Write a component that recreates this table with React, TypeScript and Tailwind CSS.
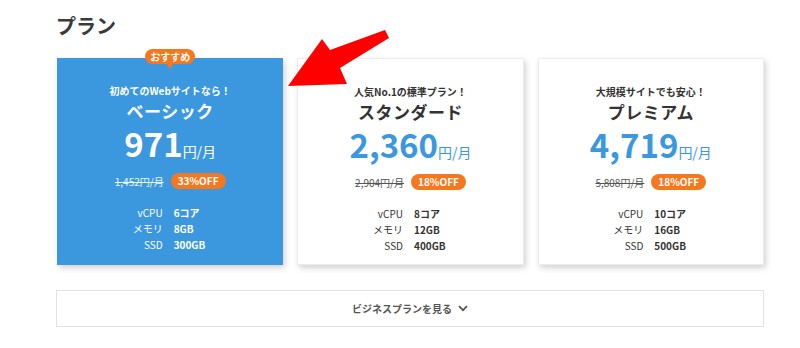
import { FC } from 'react';

type Plan = {
  lead: string;
  name: string;
  price: string;
  was: string;
  off: string;
  cpu: string;
  mem: string;
  ssd: string;
  featured?: boolean;
};

const plans: Plan[] = [
  { lead: '初めてのWebサイトなら！', name: 'ベーシック', price: '971', was: '1,452円/月', off: '33%OFF', cpu: '6コア', mem: '8GB', ssd: '300GB', featured: true },
  { lead: '人気No.1の標準プラン！', name: 'スタンダード', price: '2,360', was: '2,904円/月', off: '18%OFF', cpu: '8コア', mem: '12GB', ssd: '400GB' },
  { lead: '大規模サイトでも安心！', name: 'プレミアム', price: '4,719', was: '5,808円/月', off: '18%OFF', cpu: '10コア', mem: '16GB', ssd: '500GB' },
];

const PlanCard: FC<{ plan: Plan }> = function ({ plan }) {
  const f = plan.featured;
  return (
    <div
      className={
        'relative flex h-[207px] flex-col items-center pt-[26px] shadow-[2px_3px_6px_rgba(0,0,0,0.18)] ' +
        (f ? 'bg-[#3b98de] text-white' : 'border border-[#ececec] bg-white text-[#333]')
      }
    >
      {f && (
        <div className="absolute -top-[9px] left-1/2 -translate-x-1/2">
          <span className="block rounded-full bg-[#f5781e] px-[5px] text-[10px] leading-[15px] font-bold whitespace-nowrap text-white">
            おすすめ
          </span>
          <span className="absolute left-1/2 top-[14px] h-0 w-0 -translate-x-1/2 border-x-[4px] border-t-[6px] border-x-transparent border-t-[#f5781e]" />
        </div>
      )}
      <p className="text-[10px] leading-[14px] font-bold">{plan.lead}</p>
      <p className="text-[17px] leading-[25px] font-bold tracking-[0.5px]">{plan.name}</p>
      <p className={'mt-[2px] flex items-baseline ' + (f ? '' : 'text-[#3b98de]')}>
        <span className="text-[33px] leading-[36px] font-bold">{plan.price}</span>
        <span className="text-[14px]">円/月</span>
      </p>
      <div className="mt-[11px] flex items-center gap-[7px]">
        <span className={'text-[10px] line-through ' + (f ? 'text-white/90' : 'text-[#555]')}>{plan.was}</span>
        <span className="rounded-full bg-[#f5781e] px-[7px] text-[10px] leading-[16px] font-bold text-white">
          {plan.off}
        </span>
      </div>
      <div className="mt-[16px] grid grid-cols-[50px_54px] gap-x-[11px] text-[10px] leading-[16px]">
        <span className="text-right">vCPU</span>
        <span className="font-bold">{plan.cpu}</span>
        <span className="text-right">メモリ</span>
        <span className="font-bold">{plan.mem}</span>
        <span className="text-right">SSD</span>
        <span className="font-bold">{plan.ssd}</span>
      </div>
    </div>
  );
};

const App: FC = function () {
  return (
    <div
      className="relative h-[348px] w-[800px] overflow-hidden bg-white"
      style={{ fontFamily: '"Noto Sans CJK JP", "Noto Sans", sans-serif' }}
    >
      <div className="ml-[56px] w-[708px] pt-[12px]">
        <h2 className="text-[20px] leading-[28px] font-bold text-[#3a3a3a]">プラン</h2>
        <div className="mt-[18px] grid grid-cols-3 gap-[14px] pl-[1px]">
          {plans.map((p) => (
            <PlanCard key={p.name} plan={p} />
          ))}
        </div>
        <button
          type="button"
          className="mt-[25px] flex h-[37px] w-full items-center justify-center gap-[6px] border border-[#e2e2e2] bg-white text-[10px] font-bold text-[#555]"
        >
          ビジネスプランを見る
          <svg width="10" height="7" viewBox="0 0 10 7" fill="none">
            <path d="M1 1.2 5 5.2 9 1.2" stroke="#555" strokeWidth="1.8" />
          </svg>
        </button>
      </div>
      <svg className="absolute left-0 top-0" width="800" height="348">
        <polygon points="288,86 322,39 330,50 385,30 389,38 340,68 347,84" fill="#ff0000" />
      </svg>
    </div>
  );
};

export default App;
